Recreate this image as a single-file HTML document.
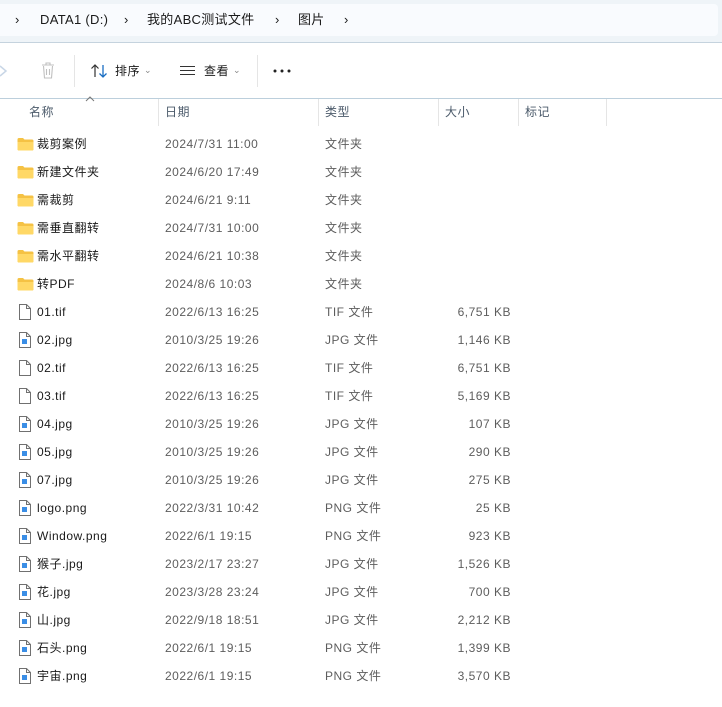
<!DOCTYPE html>
<html><head><meta charset="utf-8"><style>
*{margin:0;padding:0;box-sizing:border-box}
body{width:722px;height:707px;background:#fff;font-family:"Liberation Sans","Noto Sans CJK SC",sans-serif;font-size:12px;color:#1a1a1a;position:relative;overflow:hidden;letter-spacing:.5px}
span{line-height:16px;white-space:nowrap}
.top{position:absolute;left:0;top:0;width:722px;height:43px;background:#eff4f8;border-bottom:1px solid #c5d3de}
.crumb{position:absolute;left:0;top:4px;width:718px;height:32px;background:#f9fbfe;border-radius:0 4px 4px 0}
.c{position:absolute;top:12px;font-size:13px;color:#1a1a1a;letter-spacing:.3px}
.t{position:absolute;font-size:12px;color:#1a1a1a}
.hdr{position:absolute;top:98px;left:0;width:722px;border-top:1px solid #bccfdc}
.sep{position:absolute;top:99px;height:27px;width:1px;background:#e5e5e5}
.h{position:absolute;top:104px;color:#4c5b6b;font-size:12px}
.r{position:absolute;left:0;width:722px;height:28px}
.r span{position:absolute;top:6px}
.n{left:37px;color:#1a1a1a}
.d{left:165px;color:#5d5d5d}
.y{left:325px;color:#5d5d5d}
.s{right:211px;color:#5d5d5d}
.ic{position:absolute;left:17px;top:7px}
</style></head><body>
<div class="top"><div class="crumb"></div></div>
<span class="c" style="left:15px">›</span>
<span class="c" style="left:40px">DATA1 (D:)</span>
<span class="c" style="left:124px">›</span>
<span class="c" style="left:147px">我的ABC测试文件</span>
<span class="c" style="left:275px">›</span>
<span class="c" style="left:298px">图片</span>
<span class="c" style="left:344px">›</span>

<svg style="position:absolute;left:0;top:62px" width="10" height="18"><path d="M0 4 L6 9 L0 14" fill="none" stroke="#c8d6e6" stroke-width="1.5"/></svg>
<svg style="position:absolute;left:40px;top:62px" width="16" height="18"><path d="M2 3H14M6 3V1H10V3M3.5 4L4.5 16H11.5L12.5 4M6.5 7V13M9.5 7V13" fill="none" stroke="#c0c0c0" stroke-width="1.1"/></svg>
<div style="position:absolute;left:74px;top:55px;width:1px;height:32px;background:#e5e5e5"></div>
<svg style="position:absolute;left:90px;top:62px" width="20" height="18"><path d="M5 15V3M1.5 6.5L5 3L8.5 6.5" fill="none" stroke="#333" stroke-width="1.2"/><path d="M13 3V15M9.5 11.5L13 15L16.5 11.5" fill="none" stroke="#1a6ec2" stroke-width="1.3"/></svg>
<span class="t" style="left:115px;top:63px">排序</span>
<span class="t" style="left:144px;top:62px;color:#888;font-size:9px">⌄</span>
<svg style="position:absolute;left:179px;top:65px" width="18" height="12"><path d="M1 1.5H16M1 5.5H16M1 9.5H16" stroke="#333" stroke-width="1.1"/></svg>
<span class="t" style="left:204px;top:63px">查看</span>
<span class="t" style="left:233px;top:62px;color:#888;font-size:9px">⌄</span>
<div style="position:absolute;left:257px;top:55px;width:1px;height:32px;background:#e5e5e5"></div>
<svg style="position:absolute;left:273px;top:69px" width="20" height="5"><circle cx="2" cy="2" r="1.5" fill="#222"/><circle cx="9" cy="2" r="1.5" fill="#222"/><circle cx="16" cy="2" r="1.5" fill="#222"/></svg>

<div class="hdr"></div>
<svg style="position:absolute;left:85px;top:96px" width="10" height="6"><path d="M1 5L5 1L9 5" fill="none" stroke="#777" stroke-width="1"/></svg>
<div class="sep" style="left:158px"></div><div class="sep" style="left:318px"></div><div class="sep" style="left:438px"></div><div class="sep" style="left:518px"></div><div class="sep" style="left:606px"></div>
<span class="h" style="left:29px">名称</span>
<span class="h" style="left:165px">日期</span>
<span class="h" style="left:325px">类型</span>
<span class="h" style="left:445px">大小</span>
<span class="h" style="left:525px">标记</span>

<div id="rows"></div>
<script>
var F='<svg class="ic" width="17" height="14"><path d="M0.5 2.5Q0.5 1 2 1H6L7.5 2.5H15Q16.5 2.5 16.5 4V12Q16.5 13.5 15 13.5H2Q0.5 13.5 0.5 12Z" fill="#f5c244"/><path d="M0.5 5H16.5V12Q16.5 13.5 15 13.5H2Q0.5 13.5 0.5 12Z" fill="#ffd866"/></svg>';
var D='<svg class="ic" width="17" height="16" style="top:6px"><path d="M2.5 0.5H9.5L13.5 4.5V15.5H2.5Z" fill="#fff" stroke="#707070"/><path d="M9.5 0.5V4.5H13.5" fill="none" stroke="#707070"/></svg>';
var J='<svg class="ic" width="17" height="16" style="top:6px"><path d="M2.5 0.5H9.5L13.5 4.5V15.5H2.5Z" fill="#fff" stroke="#707070"/><path d="M9.5 0.5V4.5H13.5" fill="none" stroke="#707070"/><rect x="5" y="7" width="5" height="5" fill="#3a8ee6"/></svg>';
var rows=[
[F,'裁剪案例','2024/7/31 11:00','文件夹',''],
[F,'新建文件夹','2024/6/20 17:49','文件夹',''],
[F,'需裁剪','2024/6/21 9:11','文件夹',''],
[F,'需垂直翻转','2024/7/31 10:00','文件夹',''],
[F,'需水平翻转','2024/6/21 10:38','文件夹',''],
[F,'转PDF','2024/8/6 10:03','文件夹',''],
[D,'01.tif','2022/6/13 16:25','TIF 文件','6,751 KB'],
[J,'02.jpg','2010/3/25 19:26','JPG 文件','1,146 KB'],
[D,'02.tif','2022/6/13 16:25','TIF 文件','6,751 KB'],
[D,'03.tif','2022/6/13 16:25','TIF 文件','5,169 KB'],
[J,'04.jpg','2010/3/25 19:26','JPG 文件','107 KB'],
[J,'05.jpg','2010/3/25 19:26','JPG 文件','290 KB'],
[J,'07.jpg','2010/3/25 19:26','JPG 文件','275 KB'],
[J,'logo.png','2022/3/31 10:42','PNG 文件','25 KB'],
[J,'Window.png','2022/6/1 19:15','PNG 文件','923 KB'],
[J,'猴子.jpg','2023/2/17 23:27','JPG 文件','1,526 KB'],
[J,'花.jpg','2023/3/28 23:24','JPG 文件','700 KB'],
[J,'山.jpg','2022/9/18 18:51','JPG 文件','2,212 KB'],
[J,'石头.png','2022/6/1 19:15','PNG 文件','1,399 KB'],
[J,'宇宙.png','2022/6/1 19:15','PNG 文件','3,570 KB']];
var h='';
rows.forEach(function(r,i){h+='<div class="r" style="top:'+(130+i*28)+'px">'+r[0]+'<span class="n">'+r[1]+'</span><span class="d">'+r[2]+'</span><span class="y">'+r[3]+'</span><span class="s">'+r[4]+'</span></div>';});
document.getElementById('rows').innerHTML=h;
</script>
</body></html>
